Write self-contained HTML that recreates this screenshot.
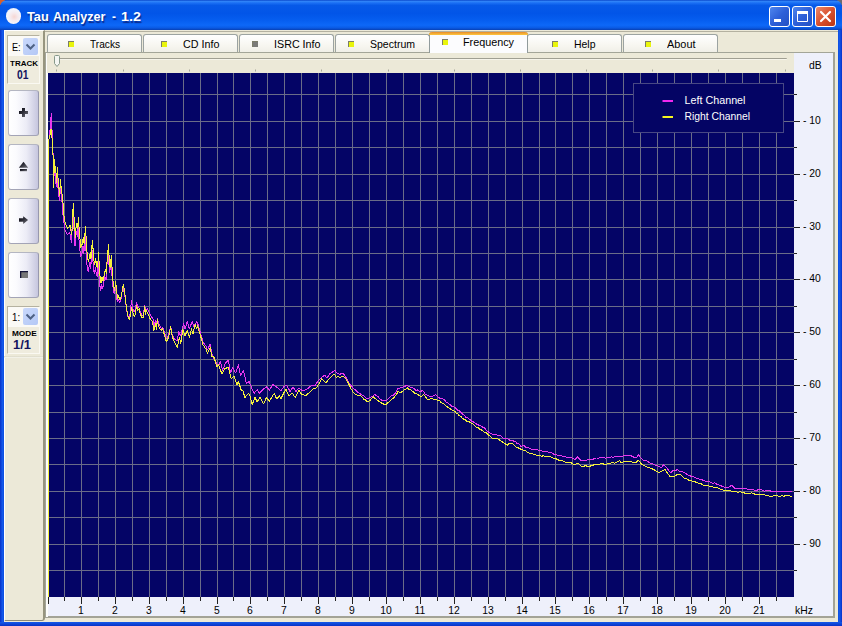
<!DOCTYPE html>
<html><head><meta charset="utf-8"><title>Tau Analyzer - 1.2</title>
<style>
html,body{margin:0;padding:0;}
body{width:842px;height:626px;overflow:hidden;position:relative;background:#0a3fd6;font-family:"Liberation Sans",sans-serif;}
div,i,span{position:absolute;box-sizing:border-box;}
#title{z-index:2;left:0;top:0;width:842px;height:30px;background:linear-gradient(to bottom,#0b49cc 0%,#2e82f8 5%,#1a6ff4 10%,#0659e8 18%,#0255e8 45%,#065ef0 68%,#0d68f8 84%,#0a5ae4 93%,#0840b4 100%);border-radius:7px 7px 0 0;}
#ticon{left:6px;top:8.3px;width:15.4px;height:15.4px;border-radius:50%;background:radial-gradient(circle at 55% 55%,#f6d6d2 0%,#f6e9ec 30%,#f4f5fc 60%,#dfe6f8 82%,#b4c2ea 100%);}
.tt{top:8.9px;color:#fff;font-weight:bold;font-size:13px;line-height:16px;white-space:nowrap;text-shadow:1px 1px 1px #0a2a8c;transform-origin:0 0;}
.wb{top:6px;width:21px;height:21px;border:1px solid #fff;border-radius:3px;background:linear-gradient(135deg,#4f86ee 0%,#2d5fd8 50%,#2350c4 100%);}
.wb.close{background:linear-gradient(135deg,#ec8a6c 0%,#d9512e 50%,#b93615 100%);}
#client{left:4px;top:30px;width:834px;height:592px;background:#ece9d8;}
#lb{left:0;top:30px;width:4px;height:596px;background:linear-gradient(to right,#0831c8,#1458ea 60%,#0d4ee0);}
#rb{left:838px;top:30px;width:4px;height:596px;background:linear-gradient(to right,#0d4ee0,#1458ea 40%,#0831c8);}
#bb{left:0;top:622px;width:842px;height:4px;background:linear-gradient(to bottom,#1458ea,#0d46d6 50%,#0831c8);}
/* side */
#side{left:4px;top:30px;width:41px;height:591px;border-left:1px solid #fff;border-top:1px solid #fff;border-right:2px solid #97957f;border-bottom:1px solid #8c8a78;border-radius:0 0 3px 0;}
#sideline{left:4px;top:356px;width:39px;height:2px;background:linear-gradient(#d8d5c2,#fbfaf4);}
.gb{left:7px;width:33px;border-top:1px solid #b5b2a0;border-left:1px solid #b5b2a0;border-right:1px solid #faf9f2;border-bottom:1px solid #faf9f2;background:#efecde;}
.cb{left:8px;width:31px;height:20px;background:#fbfaf6;}
.cbt{font-size:11px;line-height:12px;color:#000;transform-origin:0 0;white-space:nowrap;}
.dd{width:15px;height:17px;background:linear-gradient(135deg,#c9d8fb,#b4c8f6);border-radius:2px;}
.lbl{font-weight:bold;font-size:7px;line-height:7px;color:#000;transform-origin:0 0;white-space:nowrap;}
.num{font-weight:bold;font-size:12px;line-height:12px;color:#14145e;transform-origin:0 0;white-space:nowrap;}
.btn{left:8px;width:31px;height:46px;border:1px solid #b4b6c2;border-right-color:#9798ae;border-bottom-color:#a3a4b6;border-radius:3px;background:linear-gradient(to right,#ffffff 0%,#fbfbfe 25%,#ececf6 60%,#c6c6de 100%);}
#sunk{left:45px;top:31px;width:793px;height:590px;border-top:1px solid #b4b1a0;}
/* tabs */
.tab{top:34px;width:95px;height:19px;border:1px solid #9ca3a1;border-bottom:none;border-radius:3px 3px 0 0;background:linear-gradient(#ffffff,#f7f6f0 60%,#efeee6);font-size:11px;color:#000;}
.tab span{top:3px;line-height:13px;white-space:nowrap;transform-origin:0 0;}
.ic{top:6px;width:6px;height:6px;border-top:1px solid #7d7d6a;border-left:1px solid #7d7d6a;}
.ic.y{background:#e9f50c;}
.ic.g{background:#7b7b78;}
#seltab{left:429px;top:32px;width:99px;height:21px;border:1px solid #919b9c;border-bottom:none;border-top:none;border-radius:3px 3px 0 0;background:#fcfcfe;font-size:11px;}
#seltab b{position:absolute;left:-1px;top:0;width:99px;height:3px;border-radius:3px 3px 0 0;background:linear-gradient(#e68b2c,#ffc73c);}
#seltab span{top:4px;line-height:13px;white-space:nowrap;transform-origin:0 0;}
#pane{left:45px;top:52px;width:790px;height:566px;border:1px solid #a3a598;border-right:2px solid #a3a396;border-bottom:2px solid #a3a396;background:#eef0fb;}
#paneL{left:46px;top:53px;width:2px;height:564px;background:#fdfdfb;}
#slrow{left:47px;top:53px;width:747px;height:20px;background:#ece9d8;}
#track{left:58px;top:58px;width:729px;height:2px;border-top:1px solid #a09f92;border-bottom:1px solid #f6f4ea;border-radius:0 1px 1px 0;}
.xl{top:604px;width:40px;text-align:center;font-size:11.5px;line-height:12px;color:#000;transform:scaleX(0.9);}
.yl{left:803.4px;width:30px;font-size:11.5px;line-height:14px;color:#000;white-space:pre;transform:scaleX(0.9);transform-origin:0 0;}
svg{position:absolute;left:0;top:0;}
</style></head><body>
<div id="title"><div id="ticon"></div><div class="tt" style="left:27.2px;transform:scale(0.984,1.04)">Tau</div><div class="tt" style="left:53.2px;transform:scale(0.965,1.04)">Analyzer</div><div class="tt" style="left:112px;transform:scale(0.9,1.04)">-</div><div class="tt" style="left:120.7px;transform:scale(1.1,1.04)">1.2</div>
<div class="wb" style="left:769px"><svg width="19" height="19"><rect x="4" y="12" width="7" height="3" fill="#fff"/></svg></div>
<div class="wb" style="left:792px"><svg width="19" height="19"><path d="M4.5 5.5h10v9h-10z" fill="none" stroke="#fff" stroke-width="1"/><rect x="4" y="4" width="11" height="3" fill="#fff"/></svg></div>
<div class="wb close" style="left:815px"><svg width="19" height="19"><path d="M5 5l9 9M14 5l-9 9" stroke="#fff" stroke-width="2.2" stroke-linecap="round"/></svg></div>
</div>
<div style="left:0;top:0;width:5px;height:5px;background:#d8602a"></div><div style="left:837px;top:0;width:5px;height:5px;background:#6a6a72"></div>
<div id="lb"></div><div id="rb"></div><div id="bb"></div>
<div id="client"></div>
<div id="side"></div><div id="sunk"></div><div id="sideline"></div>
<div class="gb" style="top:35px;height:49px"></div>
<div class="cb" style="top:36px"></div>
<div class="cbt" style="left:11.8px;top:41px;transform:scaleX(0.83)">E:</div>
<div class="dd" style="left:23px;top:38px"><svg width="15" height="17"><path d="M3.5 6.5l4 4l4-4" fill="none" stroke="#4d6185" stroke-width="2"/></svg></div>
<div class="lbl" style="left:10px;top:60px;transform:scale(1.143,1)">TRACK</div>
<div class="num" style="left:16.5px;top:68.5px;transform:scale(0.86,1)">01</div>
<div class="btn" style="top:89.5px"></div>
<div class="btn" style="top:143.5px"></div>
<div class="btn" style="top:197.5px"></div>
<div class="btn" style="top:251.5px"></div>
<div class="gb" style="top:305.5px;height:48px"></div>
<div class="cb" style="top:306.5px"></div>
<div class="cbt" style="left:12.4px;top:311px;transform:scaleX(0.88)">1:</div>
<div class="dd" style="left:23px;top:308px"><svg width="15" height="17"><path d="M3.5 6.5l4 4l4-4" fill="none" stroke="#4d6185" stroke-width="2"/></svg></div>
<div class="lbl" style="left:11.5px;top:330px;transform:scale(1.176,1)">MODE</div>
<div class="num" style="left:12.5px;top:338.5px;transform:scale(1.07,1)">1/1</div>
<div class="tab" style="left:47px"><i class="ic y" style="left:19.9px"></i><span style="left:41.7px;transform:scaleX(0.921)">Tracks</span></div><div class="tab" style="left:143px"><i class="ic y" style="left:16.7px"></i><span style="left:38.5px;transform:scaleX(0.976)">CD Info</span></div><div class="tab" style="left:239px"><i class="ic g" style="left:11.7px"></i><span style="left:33.5px;transform:scaleX(0.975)">ISRC Info</span></div><div class="tab" style="left:335px"><i class="ic y" style="left:12.4px"></i><span style="left:34.2px;transform:scaleX(0.956)">Spectrum</span></div><div class="tab" style="left:527px"><i class="ic y" style="left:24.2px"></i><span style="left:46.0px;transform:scaleX(0.950)">Help</span></div><div class="tab" style="left:623px"><i class="ic y" style="left:20.7px"></i><span style="left:42.5px;transform:scaleX(0.991)">About</span></div>
<div id="pane"></div><div id="paneL"></div><div id="slrow"></div><div id="track"></div>
<div id="seltab"><b></b><i class="ic y" style="left:12px;top:7px"></i><span style="left:33px;transform:scaleX(0.981)">Frequency</span></div>
<div class="xl" style="left:60.8px">1</div><div class="xl" style="left:94.8px">2</div><div class="xl" style="left:128.8px">3</div><div class="xl" style="left:162.8px">4</div><div class="xl" style="left:196.8px">5</div><div class="xl" style="left:229.8px">6</div><div class="xl" style="left:263.8px">7</div><div class="xl" style="left:297.8px">8</div><div class="xl" style="left:331.8px">9</div><div class="xl" style="left:365.8px">10</div><div class="xl" style="left:399.8px">11</div><div class="xl" style="left:433.8px">12</div><div class="xl" style="left:467.8px">13</div><div class="xl" style="left:501.8px">14</div><div class="xl" style="left:534.8px">15</div><div class="xl" style="left:568.8px">16</div><div class="xl" style="left:602.8px">17</div><div class="xl" style="left:636.8px">18</div><div class="xl" style="left:670.8px">19</div><div class="xl" style="left:704.8px">20</div><div class="xl" style="left:738.8px">21</div><div class="yl" style="top:113.0px">- 10</div><div class="yl" style="top:166.0px">- 20</div><div class="yl" style="top:219.0px">- 30</div><div class="yl" style="top:271.0px">- 40</div><div class="yl" style="top:324.0px">- 50</div><div class="yl" style="top:377.0px">- 60</div><div class="yl" style="top:430.0px">- 70</div><div class="yl" style="top:483.0px">- 80</div><div class="yl" style="top:536.0px">- 90</div>
<div class="yl" style="left:808.7px;top:57.5px">dB</div>
<div class="xl" style="left:794.8px;top:604px;width:auto;transform-origin:0 0">kHz</div>
<svg width="842" height="626" viewBox="0 0 842 626">
<defs><linearGradient id="ig" x1="0" y1="0" x2="1" y2="1"><stop offset="0" stop-color="#05050f"/><stop offset="0.45" stop-color="#2c2c36"/><stop offset="1" stop-color="#77777f"/></linearGradient></defs><g fill="url(#ig)"><path d="M19 111h3v-3h3v3h3v3h-3v3h-3v-3h-3z"/>
<path d="M23.5 161.7l4.7 6.1h-9.4z"/><rect x="20" y="169" width="7" height="2.2"/>
<path d="M19 218.2h4.2v-2l4.9 3.9l-4.9 3.9v-2.2h-4.2z"/>
<rect x="20" y="271" width="8" height="7" fill="#777"/><path d="M20 278v-7h8v1.3h-6.7v5.7z" fill="#15153a"/></g>
<rect x="48" y="73" width="746" height="524" fill="#040466"/>
<g fill="#6a6c88"><rect x="64" y="73" width="1" height="524"/><rect x="81" y="73" width="1" height="524"/><rect x="98" y="73" width="1" height="524"/><rect x="115" y="73" width="1" height="524"/><rect x="132" y="73" width="1" height="524"/><rect x="149" y="73" width="1" height="524"/><rect x="166" y="73" width="1" height="524"/><rect x="183" y="73" width="1" height="524"/><rect x="200" y="73" width="1" height="524"/><rect x="217" y="73" width="1" height="524"/><rect x="233" y="73" width="1" height="524"/><rect x="250" y="73" width="1" height="524"/><rect x="267" y="73" width="1" height="524"/><rect x="284" y="73" width="1" height="524"/><rect x="301" y="73" width="1" height="524"/><rect x="318" y="73" width="1" height="524"/><rect x="335" y="73" width="1" height="524"/><rect x="352" y="73" width="1" height="524"/><rect x="369" y="73" width="1" height="524"/><rect x="386" y="73" width="1" height="524"/><rect x="403" y="73" width="1" height="524"/><rect x="420" y="73" width="1" height="524"/><rect x="437" y="73" width="1" height="524"/><rect x="454" y="73" width="1" height="524"/><rect x="471" y="73" width="1" height="524"/><rect x="488" y="73" width="1" height="524"/><rect x="505" y="73" width="1" height="524"/><rect x="522" y="73" width="1" height="524"/><rect x="539" y="73" width="1" height="524"/><rect x="555" y="73" width="1" height="524"/><rect x="572" y="73" width="1" height="524"/><rect x="589" y="73" width="1" height="524"/><rect x="606" y="73" width="1" height="524"/><rect x="623" y="73" width="1" height="524"/><rect x="640" y="73" width="1" height="524"/><rect x="657" y="73" width="1" height="524"/><rect x="674" y="73" width="1" height="524"/><rect x="691" y="73" width="1" height="524"/><rect x="708" y="73" width="1" height="524"/><rect x="725" y="73" width="1" height="524"/><rect x="742" y="73" width="1" height="524"/><rect x="759" y="73" width="1" height="524"/><rect x="776" y="73" width="1" height="524"/><rect x="48" y="94" width="746" height="1"/><rect x="48" y="121" width="746" height="1"/><rect x="48" y="147" width="746" height="1"/><rect x="48" y="174" width="746" height="1"/><rect x="48" y="200" width="746" height="1"/><rect x="48" y="227" width="746" height="1"/><rect x="48" y="253" width="746" height="1"/><rect x="48" y="279" width="746" height="1"/><rect x="48" y="306" width="746" height="1"/><rect x="48" y="332" width="746" height="1"/><rect x="48" y="359" width="746" height="1"/><rect x="48" y="385" width="746" height="1"/><rect x="48" y="412" width="746" height="1"/><rect x="48" y="438" width="746" height="1"/><rect x="48" y="464" width="746" height="1"/><rect x="48" y="491" width="746" height="1"/><rect x="48" y="517" width="746" height="1"/><rect x="48" y="544" width="746" height="1"/><rect x="48" y="570" width="746" height="1"/></g>
<rect x="633.5" y="83.5" width="150" height="49" fill="#040464" stroke="#484884"/>
<rect x="662.5" y="100" width="10.5" height="2" fill="#f028f0"/><rect x="662.5" y="116" width="10.5" height="2" fill="#f5f520"/>
<text x="684.5" y="104" font-size="11" fill="#fff" textLength="61" lengthAdjust="spacingAndGlyphs">Left Channel</text><text x="684.5" y="120" font-size="11" fill="#fff" textLength="65.6" lengthAdjust="spacingAndGlyphs">Right Channel</text>
<polyline points="48.5,597.0 48.5,140.0 49.5,138.0 50.3,125.0 51.3,113.4 52.2,134.0 53.0,152.0 53.4,168.0 54.0,162.9 54.6,176.0 55.5,170.5 56.1,186.6 57.2,171.7 57.9,186.5 58.6,193.0 59.4,200.4 60.1,184.8 60.8,192.1 61.5,198.0 62.5,205.2 63.3,219.7 64.4,224.7 64.9,229.6 66.3,232.7 67.3,234.9 69.7,232.5 70.6,237.5 71.6,242.4 72.1,226.3 73.0,211.6 73.5,222.8 74.5,234.4 75.0,246.1 75.4,238.4 76.4,231.9 77.4,236.9 78.1,226.0 78.8,237.2 79.6,247.0 80.6,256.6 82.0,252.8 83.0,246.3 83.8,253.1 85.2,236.5 85.7,245.6 86.5,259.1 87.3,267.8 88.2,271.7 90.0,262.2 90.6,268.8 92.1,249.8 93.0,261.6 93.5,269.1 94.5,273.7 95.4,267.4 96.4,275.3 97.4,276.1 98.1,260.6 99.0,273.8 99.8,285.2 100.7,290.7 101.7,284.9 102.8,288.5 104.1,280.7 105.0,276.6 106.0,280.2 106.9,265.4 108.2,249.8 108.9,264.4 109.8,272.6 111.1,259.4 111.7,270.6 112.5,283.4 113.5,291.0 114.4,293.8 115.4,285.0 116.3,294.4 117.3,301.9 118.2,298.9 119.7,302.5 121.1,298.4 122.1,291.6 123.0,286.1 124.0,292.0 125.3,299.0 126.2,307.0 127.2,313.0 128.1,317.0 129.6,318.0 130.5,309.0 131.5,300.8 132.4,306.0 133.4,311.0 134.7,312.0 135.8,306.0 136.3,302.7 137.7,306.0 138.7,307.5 140.1,311.0 141.6,315.0 143.0,316.0 144.0,310.0 144.7,305.0 145.6,311.0 147.3,308.9 149.2,312.3 151.1,316.1 153.1,319.0 154.0,326.0 155.5,320.9 156.4,326.0 157.4,318.0 158.3,323.0 159.8,326.0 161.2,328.5 162.7,327.1 163.6,330.0 166.4,339.0 168.5,335.5 170.7,326.0 172.1,334.0 174.3,339.0 177.2,341.0 178.6,331.7 180.8,336.0 183.6,323.1 185.1,329.0 187.2,321.7 189.4,329.0 192.3,321.0 193.7,327.0 196.6,321.7 198.3,325.0 200.2,332.0 203.0,342.0 205.9,346.0 207.4,350.0 210.2,344.0 211.7,353.0 214.0,358.7 218.3,366.0 220.5,361.6 222.6,370.2 225.5,363.0 228.4,360.1 230.5,373.0 232.7,367.3 235.6,373.0 238.4,364.4 240.6,375.9 243.5,370.2 246.3,383.1 249.2,381.7 252.1,388.9 254.2,393.2 257.1,389.6 259.3,393.2 262.9,389.6 266.5,386.7 269.3,390.3 272.9,384.6 277.2,387.4 280.8,391.0 283.7,386.7 286.6,385.3 290.2,391.7 293.0,386.7 295.9,391.7 298.8,388.1 303.1,391.0 307.4,388.9 311.7,385.3 314.6,386.0 317.5,381.7 321.8,377.4 324.7,375.2 326.9,378.1 329.7,373.8 332.6,372.1 334.0,370.8 335.4,370.7 337.0,373.2 338.7,374.0 340.3,374.1 341.7,373.5 343.7,373.9 345.1,376.3 347.2,379.3 348.8,382.5 350.1,384.5 351.7,385.9 353.1,388.1 355.0,389.5 356.8,391.6 358.4,392.8 359.7,393.1 361.2,394.8 362.8,395.1 364.6,396.3 366.2,398.0 368.0,398.4 369.8,397.8 371.8,396.8 373.3,395.9 374.7,394.5 376.6,395.8 378.3,396.8 380.1,399.1 381.9,400.3 383.4,400.7 385.2,401.1 386.9,400.2 388.9,398.0 390.8,396.1 392.6,395.8 394.7,394.1 396.3,391.7 398.1,388.2 399.8,388.0 401.2,387.5 403.1,386.9 404.6,386.7 406.6,385.4 408.2,386.1 410.2,387.3 412.2,387.3 413.8,388.3 415.9,390.2 417.3,389.9 418.8,390.8 420.5,391.7 422.0,390.5 423.6,391.3 425.3,394.4 427.2,395.0 429.0,395.8 430.3,396.6 432.3,396.3 434.2,395.3 435.8,394.6 437.6,396.4 439.0,397.8 440.4,398.4 441.8,398.4 443.2,399.2 444.8,400.3 446.8,402.7 448.2,403.2 449.8,404.4 451.2,405.9 453.3,406.7 454.9,407.4 456.3,408.8 457.8,410.5 459.3,410.6 461.3,412.9 462.7,414.1 464.1,415.3 466.1,417.5 468.0,418.1 469.6,419.2 471.5,421.1 473.4,421.8 474.9,423.1 477.0,424.2 478.9,425.3 480.8,425.8 482.6,427.0 483.9,427.6 485.4,429.0 487.3,431.2 488.9,432.4 491.0,433.9 492.6,434.1 494.1,434.2 495.5,434.7 497.6,435.2 499.2,435.8 501.2,436.1 503.0,438.0 504.9,438.5 506.6,438.4 508.6,439.3 510.5,440.6 512.1,440.4 514.2,441.3 515.6,441.5 517.0,443.5 519.0,444.0 520.9,446.2 522.8,445.8 524.5,446.0 525.8,447.3 527.6,447.5 529.7,448.1 531.7,449.4 533.1,449.0 534.7,449.4 536.4,449.9 538.1,450.0 540.1,450.5 541.8,451.0 543.8,451.1 545.8,451.6 547.6,452.0 548.9,452.2 550.3,452.0 552.3,453.0 553.9,454.3 555.7,454.4 557.4,455.1 559.3,455.1 561.1,455.7 562.6,456.5 564.3,456.4 566.2,457.1 567.9,457.0 569.6,457.3 571.4,457.7 573.1,458.3 575.2,459.6 577.2,456.7 578.7,458.0 580.8,460.5 582.2,460.5 583.8,461.0 585.3,460.1 587.2,460.0 589.2,459.7 591.0,460.1 592.5,459.8 594.5,458.2 596.6,458.0 598.3,458.4 600.3,457.0 601.9,457.2 603.5,457.1 605.0,458.0 606.3,458.0 608.0,457.4 609.6,457.8 611.3,456.9 613.4,457.4 615.4,456.3 616.9,456.0 618.9,456.0 620.3,456.0 622.3,456.3 623.8,455.4 625.8,455.8 627.7,455.2 629.0,455.9 630.7,455.4 632.7,456.7 634.7,457.4 636.7,457.3 638.7,454.6 640.2,457.3 642.3,459.5 643.7,460.3 645.2,460.4 646.6,460.8 648.1,461.7 649.6,463.0 651.1,463.4 652.6,463.8 653.9,464.2 655.2,465.3 656.9,465.2 658.6,466.7 660.0,467.1 661.6,467.3 663.6,465.0 665.3,466.3 667.4,468.6 669.4,471.8 671.2,472.5 672.8,470.9 674.2,470.3 676.1,470.1 677.5,469.8 679.5,471.2 681.3,471.1 682.8,471.9 684.5,472.6 686.1,473.6 688.2,475.4 689.9,475.8 692.0,476.6 693.6,476.9 695.2,477.9 696.9,478.2 698.6,478.7 700.1,479.3 701.7,479.6 703.0,480.2 704.5,480.8 706.3,481.4 708.1,481.8 710.1,482.0 711.6,483.0 713.1,483.1 714.9,482.9 716.8,484.2 718.6,484.8 720.6,485.3 722.3,486.5 724.3,487.2 726.2,487.3 728.3,487.6 730.1,486.2 731.4,485.1 733.0,486.4 735.0,488.3 736.8,488.3 738.6,488.2 739.9,488.5 741.8,488.4 743.6,488.8 744.9,489.0 746.4,488.6 747.9,489.3 749.4,489.5 751.5,489.6 753.1,489.8 754.9,490.3 756.7,490.4 758.1,489.8 759.6,489.5 761.1,489.6 762.4,490.1 764.0,491.2 765.8,490.9 767.3,490.6 769.0,490.4 770.4,491.0 771.9,491.4 773.9,491.0 775.6,491.6 777.7,491.1 779.2,491.0 781.2,491.2 783.0,491.3 784.7,491.8 786.1,491.6 787.8,491.5 789.7,491.1 791.7,491.6 792.0,491.6" fill="none" stroke="#e838f0" stroke-width="1" stroke-linejoin="round" shape-rendering="crispEdges"/>
<polyline points="48.5,597.0 48.5,140.8 50.0,135.0 51.0,129.3 52.5,142.3 53.2,158.8 53.5,187.6 54.3,159.5 54.9,172.5 55.8,166.7 56.4,182.6 57.5,167.4 58.2,182.0 58.9,188.3 59.7,195.5 60.4,179.7 61.1,186.9 61.8,192.6 62.8,199.6 63.6,214.0 64.7,218.8 65.2,223.6 66.6,226.4 67.6,228.4 70.0,225.5 70.9,230.3 71.9,235.0 72.4,218.8 73.3,203.9 73.8,215.0 74.8,226.4 75.3,238.0 75.7,230.3 76.7,223.6 77.7,228.4 78.4,217.3 79.1,228.4 79.9,238.0 80.9,247.5 82.3,243.6 83.3,237.0 84.1,243.7 85.5,226.9 86.0,236.0 86.8,249.4 87.6,258.0 88.5,261.8 90.3,252.3 90.9,259.0 92.4,240.3 93.3,252.3 93.8,259.9 94.8,264.7 95.7,258.5 96.7,266.6 97.7,267.6 98.4,252.3 99.3,265.7 100.1,277.2 101.0,282.9 102.0,277.2 103.1,281.0 104.4,273.4 105.3,269.5 106.3,273.4 107.2,259.0 108.5,244.1 109.2,259.0 110.1,267.6 111.4,255.1 112.0,266.6 112.8,279.5 113.8,287.3 114.7,290.2 115.7,281.6 116.6,291.2 117.6,298.8 118.5,296.0 120.0,299.8 121.4,296.0 122.4,289.3 123.3,284.0 124.3,289.3 125.3,296.9 126.2,305.6 127.2,312.3 128.1,316.1 129.6,319.9 130.5,314.2 131.5,307.5 132.4,310.4 133.4,315.1 134.7,316.6 135.8,310.4 136.6,305.1 137.7,310.4 139.2,308.9 140.1,313.2 141.6,317.1 143.0,318.0 144.0,312.3 144.7,306.5 145.6,314.2 146.4,310.4 147.3,312.3 149.7,318.0 150.7,319.9 152.1,320.9 153.1,325.7 154.0,330.5 155.5,323.8 156.4,329.5 157.4,319.9 158.3,325.7 159.8,328.6 161.2,330.5 162.7,328.6 163.6,332.0 166.4,341.8 168.5,337.5 170.7,326.7 172.1,336.0 174.3,341.8 177.2,347.5 179.3,337.5 180.8,343.2 182.9,329.6 185.1,336.0 187.2,330.3 189.4,337.5 191.5,328.9 193.0,333.9 195.1,324.5 196.6,328.9 197.6,326.0 200.2,334.6 203.0,344.7 205.9,349.0 207.4,353.3 210.2,347.5 211.7,356.2 214.0,357.2 216.9,366.6 218.3,364.4 221.9,373.8 224.8,368.7 228.4,367.3 231.2,378.8 234.1,375.9 237.0,384.6 238.4,381.7 241.3,390.3 242.8,390.3 244.9,397.5 248.5,393.2 250.0,396.0 252.1,404.7 255.0,397.5 257.1,401.8 260.0,397.5 263.6,404.0 266.5,397.5 269.3,401.1 274.4,393.2 276.5,398.9 279.4,396.0 280.8,398.9 285.9,388.9 288.7,396.0 292.3,393.2 295.2,397.5 298.8,390.3 301.7,394.6 306.0,395.3 310.3,391.7 313.2,388.9 316.0,388.1 319.6,383.1 321.8,378.8 324.7,381.7 326.2,382.4 329.7,378.1 332.6,375.5 334.3,374.0 336.1,377.4 337.5,376.7 339.4,377.0 340.9,377.0 342.6,376.2 344.3,377.2 345.7,378.5 347.7,381.9 349.6,385.7 350.9,388.5 352.7,391.4 354.0,393.3 355.7,394.5 357.7,395.2 359.8,395.1 361.7,396.7 363.7,399.1 365.1,399.0 366.6,401.2 368.3,401.8 369.8,400.6 371.4,398.7 373.2,396.7 375.2,398.5 377.2,400.4 379.3,401.4 380.8,402.5 382.8,403.8 384.6,404.4 386.1,404.9 387.8,402.4 389.2,402.0 391.3,399.5 393.2,398.5 394.6,396.6 396.5,394.6 397.9,391.4 399.2,392.1 400.8,392.7 402.9,390.9 405.0,389.3 406.3,388.9 407.6,387.8 409.3,389.7 410.7,389.9 412.7,391.3 414.7,393.2 416.4,393.5 418.1,394.8 419.8,396.0 421.6,396.8 423.3,394.6 425.2,396.3 426.8,398.8 428.5,399.4 429.8,399.3 431.6,398.4 433.3,399.1 434.7,399.4 436.4,399.8 437.9,400.4 439.8,400.8 441.2,402.8 443.3,403.4 444.9,405.1 446.5,406.1 448.0,407.5 449.8,408.4 451.4,409.9 452.7,410.3 454.6,411.1 456.1,413.0 457.6,413.5 459.2,415.6 460.6,416.2 462.2,418.0 463.8,419.3 465.3,419.8 467.1,421.4 468.8,421.4 470.1,422.5 471.6,423.6 473.6,424.4 475.1,426.3 476.9,427.6 478.5,427.8 480.0,429.6 481.5,430.0 483.2,431.1 484.8,432.7 486.2,432.5 488.3,434.9 490.4,436.3 492.4,438.2 493.9,438.4 495.9,438.8 497.6,438.8 499.2,439.6 500.5,440.7 502.0,441.7 503.4,442.5 505.2,443.8 507.3,445.1 509.0,443.6 510.9,443.2 512.4,443.5 514.2,445.0 516.2,447.1 517.8,447.5 519.8,448.8 521.7,449.4 523.2,450.1 525.1,450.4 527.1,452.1 529.0,453.0 530.3,453.4 532.3,453.6 533.8,454.3 535.5,454.9 537.2,455.8 538.5,455.1 539.9,455.3 541.3,456.5 543.3,455.7 545.0,456.2 546.5,456.4 548.3,456.9 549.9,456.6 551.5,457.1 553.2,458.4 554.8,458.2 556.3,458.9 558.1,459.9 559.7,460.3 561.5,460.3 563.1,461.2 564.9,462.1 566.8,463.0 568.3,462.9 570.1,462.1 571.8,463.3 573.8,464.4 575.4,464.4 577.3,463.6 579.0,463.8 580.9,465.7 582.9,467.1 584.8,465.7 586.5,466.0 588.3,466.7 589.7,467.0 591.0,465.6 592.4,466.0 593.9,464.5 595.8,464.1 597.8,464.3 599.8,464.2 601.5,463.6 602.9,463.9 604.6,464.2 606.0,464.6 608.0,463.3 609.6,463.6 611.5,462.9 613.0,462.7 614.8,463.1 616.4,462.5 618.0,461.2 619.6,460.7 621.3,462.9 623.0,461.9 624.4,461.3 626.3,461.4 628.0,461.3 629.8,461.9 631.2,461.3 633.1,462.7 634.9,462.6 636.7,461.9 638.2,460.5 640.0,462.0 641.5,464.4 643.6,465.2 645.4,466.2 647.4,467.1 648.9,467.2 650.2,468.1 651.8,468.5 653.4,469.5 655.4,470.4 657.4,471.9 659.2,472.1 661.2,471.8 662.9,470.6 664.8,469.3 666.4,471.5 668.5,474.5 670.0,476.9 671.9,477.0 673.9,476.4 675.4,475.6 676.9,474.8 678.8,474.5 680.8,474.9 682.8,476.6 684.4,478.1 685.8,478.4 687.8,479.6 689.4,480.4 691.2,480.5 692.8,481.2 694.5,481.2 696.2,482.4 697.8,482.8 699.2,483.3 701.1,483.8 703.1,485.0 704.5,485.4 706.1,485.6 708.0,485.7 709.8,486.5 711.8,486.6 713.7,487.5 715.5,487.3 716.9,487.5 718.5,488.3 720.3,489.1 721.8,489.9 723.6,490.1 725.6,490.5 727.0,490.8 728.4,490.2 730.3,490.9 732.0,491.3 733.7,491.4 735.1,491.4 737.0,492.0 738.7,492.0 740.3,491.6 741.9,492.5 743.2,492.5 744.7,493.1 746.3,493.0 747.9,493.2 749.9,493.1 751.8,492.9 753.4,493.3 754.8,494.2 756.6,494.2 758.1,494.6 760.0,495.0 761.9,494.8 763.3,494.6 764.7,495.0 766.5,495.1 768.0,495.9 769.3,496.1 771.3,496.7 772.9,496.0 774.7,495.3 776.8,495.7 778.3,496.1 780.0,496.1 781.9,495.9 783.8,496.2 785.5,495.7 787.2,495.5 788.9,495.6 790.6,496.3 792.0,496.4" fill="none" stroke="#f6f23a" stroke-width="1" stroke-linejoin="round" shape-rendering="crispEdges"/>
<g fill="#222"><rect x="48" y="597" width="1" height="7"/><rect x="64" y="597" width="1" height="4"/><rect x="81" y="597" width="1" height="7"/><rect x="98" y="597" width="1" height="4"/><rect x="115" y="597" width="1" height="7"/><rect x="132" y="597" width="1" height="4"/><rect x="149" y="597" width="1" height="7"/><rect x="166" y="597" width="1" height="4"/><rect x="183" y="597" width="1" height="7"/><rect x="200" y="597" width="1" height="4"/><rect x="217" y="597" width="1" height="7"/><rect x="233" y="597" width="1" height="4"/><rect x="250" y="597" width="1" height="7"/><rect x="267" y="597" width="1" height="4"/><rect x="284" y="597" width="1" height="7"/><rect x="301" y="597" width="1" height="4"/><rect x="318" y="597" width="1" height="7"/><rect x="335" y="597" width="1" height="4"/><rect x="352" y="597" width="1" height="7"/><rect x="369" y="597" width="1" height="4"/><rect x="386" y="597" width="1" height="7"/><rect x="403" y="597" width="1" height="4"/><rect x="420" y="597" width="1" height="7"/><rect x="437" y="597" width="1" height="4"/><rect x="454" y="597" width="1" height="7"/><rect x="471" y="597" width="1" height="4"/><rect x="488" y="597" width="1" height="7"/><rect x="505" y="597" width="1" height="4"/><rect x="522" y="597" width="1" height="7"/><rect x="539" y="597" width="1" height="4"/><rect x="555" y="597" width="1" height="7"/><rect x="572" y="597" width="1" height="4"/><rect x="589" y="597" width="1" height="7"/><rect x="606" y="597" width="1" height="4"/><rect x="623" y="597" width="1" height="7"/><rect x="640" y="597" width="1" height="4"/><rect x="657" y="597" width="1" height="7"/><rect x="674" y="597" width="1" height="4"/><rect x="691" y="597" width="1" height="7"/><rect x="708" y="597" width="1" height="4"/><rect x="725" y="597" width="1" height="7"/><rect x="742" y="597" width="1" height="4"/><rect x="759" y="597" width="1" height="7"/><rect x="776" y="597" width="1" height="4"/><rect x="794" y="94" width="3" height="1"/><rect x="794" y="121" width="6" height="1"/><rect x="794" y="147" width="3" height="1"/><rect x="794" y="174" width="6" height="1"/><rect x="794" y="200" width="3" height="1"/><rect x="794" y="227" width="6" height="1"/><rect x="794" y="253" width="3" height="1"/><rect x="794" y="279" width="6" height="1"/><rect x="794" y="306" width="3" height="1"/><rect x="794" y="332" width="6" height="1"/><rect x="794" y="359" width="3" height="1"/><rect x="794" y="385" width="6" height="1"/><rect x="794" y="412" width="3" height="1"/><rect x="794" y="438" width="6" height="1"/><rect x="794" y="464" width="3" height="1"/><rect x="794" y="491" width="6" height="1"/><rect x="794" y="517" width="3" height="1"/><rect x="794" y="544" width="6" height="1"/><rect x="794" y="570" width="3" height="1"/></g>
<g fill="#a8a89a"><rect x="56" y="69.5" width="1" height="2"/><rect x="123" y="69.5" width="1" height="2"/><rect x="189" y="69.5" width="1" height="2"/><rect x="255" y="69.5" width="1" height="2"/><rect x="321" y="69.5" width="1" height="2"/><rect x="388" y="69.5" width="1" height="2"/><rect x="454" y="69.5" width="1" height="2"/><rect x="520" y="69.5" width="1" height="2"/><rect x="586" y="69.5" width="1" height="2"/><rect x="652" y="69.5" width="1" height="2"/><rect x="718" y="69.5" width="1" height="2"/><rect x="785" y="69.5" width="1" height="2"/></g>
<path d="M54.5 56.5q0-1 1-1h3q1 0 1 1v7l-2.5 3l-2.5-3z" fill="#f4f6f2" stroke="#86988a"/>
</svg>
</body></html>
